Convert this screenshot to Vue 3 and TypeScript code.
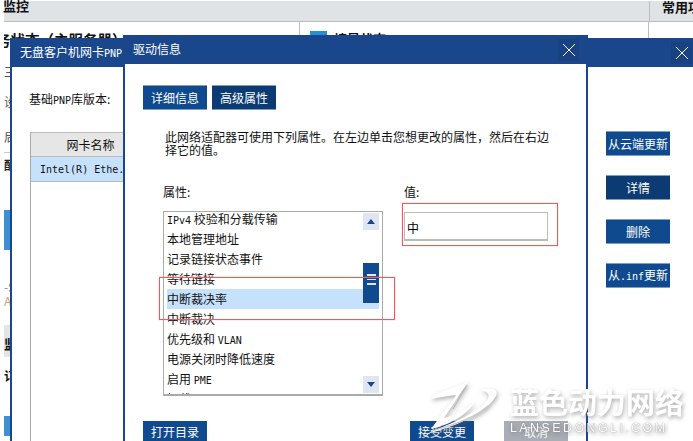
<script setup lang="ts">
const props: { label: string; latin?: string }[] = [
  { label: '本地管理地址' },
  { label: '记录链接状态事件' },
  { label: '等待链接' },
  { label: '中断裁决率' },
  { label: '中断裁决' },
  { label: '优先级和 ', latin: 'VLAN' },
  { label: '电源关闭时降低速度' },
  { label: '启用 ', latin: 'PME' },
  { label: '卸载 ', latin: 'TCP/IP' },
]
const selected = '中断裁决率'
</script>

<template>
  <div class="screen">
    <!-- page behind the dialogs -->
    <div class="page">
      <div class="page-head">
        <b class="head-a">监控</b>
        <b class="head-b">常用项</b>
      </div>
      <div class="page-body">
        <div class="col-a">
          <b class="status">务状态（主服务器）</b>
          <div class="frag f1">三</div>
          <div class="frag f2">设</div>
          <div class="frag f3">后</div>
          <div class="rule"></div>
          <b class="frag f4">配</b>
          <div class="blue b1"></div>
          <div class="frag f5">-S</div>
          <div class="frag f6">AC</div>
          <div class="band"><b>监</b></div>
          <b class="frag f7">订</b>
          <div class="blue b2"></div>
        </div>
        <div class="col-b">
          <span class="square"></span><b>接是状态</b>
        </div>
        <div class="col-c"></div>
      </div>
    </div>

    <!-- back dialog -->
    <section class="win win-back">
      <header class="win-head">
        <span class="title">无盘客户机网卡<span class="mono">PNP-</span></span>
        <span class="close">
          <svg width="16" height="16" viewBox="0 0 16 16"><path d="M2 2 14 14M14 2 2 14" stroke="#fff" stroke-width="1" fill="none" /></svg>
        </span>
      </header>
      <div class="back-body">
        <div class="back-left">
          <div class="base-lib">基础<span class="mono">PNP</span>库版本:</div>
          <div class="nic-table">
            <div class="nic-head">网卡名称</div>
            <div class="nic-row mono">Intel(R) Ethe.</div>
          </div>
        </div>
        <div class="back-actions">
          <button class="btn">从云端更新</button>
          <button class="btn dark">详情</button>
          <button class="btn">删除</button>
          <button class="btn">从<span class="mono">.inf</span>更新</button>
        </div>
      </div>
    </section>

    <!-- front dialog -->
    <section class="win win-front">
      <header class="win-head">
        <span class="title">驱动信息</span>
        <span class="close">
          <svg width="16" height="16" viewBox="0 0 16 16"><path d="M2 2 14 14M14 2 2 14" stroke="#fff" stroke-width="1" fill="none" /></svg>
        </span>
      </header>
      <div class="front-body">
        <div class="tabs">
          <button class="btn">详细信息</button>
          <button class="btn dark">高级属性</button>
        </div>
        <p class="desc">此网络适配器可使用下列属性。在左边单击您想更改的属性，然后在右边<br />择它的值。</p>
        <div class="fields">
          <div class="field-list">
            <div class="label">属性:</div>
            <div class="listbox">
              <div class="items">
                <div class="item partial"><span class="mono">IPv4</span> 校验和分载传输</div>
                <div v-for="p in props" :key="p.label" class="item" :class="{ sel: p.label === selected }">
                  {{ p.label }}<span v-if="p.latin" class="mono">{{ p.latin }}</span>
                </div>
              </div>
              <div class="scrollbar">
                <div class="arrow"><svg width="8" height="5" viewBox="0 0 10 6"><path d="M5 0 10 6H0Z" fill="#134a8e" /></svg></div>
                <div class="track">
                  <div class="thumb"><i></i><i></i><i></i></div>
                </div>
                <div class="arrow"><svg width="8" height="5" viewBox="0 0 10 6"><path d="M0 0H10L5 6Z" fill="#134a8e" /></svg></div>
              </div>
            </div>
          </div>
          <div class="field-value">
            <div class="label">值:</div>
            <div class="value-box">中</div>
          </div>
        </div>
        <div class="front-actions">
          <button class="btn">打开目录</button>
          <div class="right-actions">
            <button class="btn">接受变更</button>
            <button class="btn muted">取消</button>
          </div>
        </div>
      </div>
    </section>

    <!-- annotations -->
    <div class="mark mark-row"></div>
    <div class="mark mark-value"></div>

    <!-- watermark -->
    <div class="wm">
      <svg class="wm-logo" width="76" height="54" viewBox="0 0 76 54">
        <path d="M10 14 C22 9 34 5 45 1 L21 37 C32 34 44 28 52 20 C46 32 30 43 8 48 L33 14 C25 15 17 16 8 18Z" fill="#fff" />
        <path d="M44 4 30 28" stroke="#b4b7bb" stroke-width="1" fill="none" />
        <path d="M57 9 C70 5 76 9 73 15 C65 30 36 45 3 53 C30 42 58 30 65 18 C67 13 64 10 57 9Z" fill="#fff" />
        <path d="M8 50 C32 44 54 35 66 24" stroke="#c9ccd0" stroke-width="1.2" fill="none" />
      </svg>
      <div class="wm-text">
        <div class="wm-cn">蓝色动力网络</div>
        <div class="wm-en">LANSEDONGLI.COM</div>
      </div>
    </div>
  </div>
</template>

<style scoped>
.screen {
  position: relative;
  width: 693px;
  height: 441px;
  overflow: hidden;
  background: #fff;
  color: #111;
  font: 12px/1.2 "Noto Sans CJK SC", "Liberation Sans", sans-serif;
}
.mono {
  font-family: "DejaVu Sans Mono", "Liberation Mono", monospace;
  font-size: 10px;
}
.page {
  padding: 1px 0 0 4px;
}
.page-head {
  display: flex;
  justify-content: space-between;
  height: 20px;
  background: #dfe3e6;
  border-bottom: 1px solid #bdbdbd;
  font-size: 13px;
  line-height: 9px;
}
.head-a {
  margin-left: -1px;
}
.head-b {
  width: 44px;
  line-height: 12px;
  padding-left: 12px;
  border-left: 1px solid #bdbdbd;
  box-sizing: border-box;
  white-space: nowrap;
  overflow: hidden;
}
.page-body {
  display: grid;
  grid-template-columns: 295px 350px 1fr;
  height: 419px;
}
.col-a {
  overflow: hidden;
  white-space: nowrap;
}
.status {
  display: block;
  margin-top: 8px;
  margin-left: -8px;
  font-size: 14.5px;
  height: 35px;
  line-height: 20px;
}
.frag {
  font-size: 12px;
  color: #555;
  height: 14px;
  line-height: 14px;
}
.f2 {
  margin-top: 16px;
}
.f3 {
  margin-top: 21px;
}
.rule {
  margin-top: 8px;
  height: 1px;
  width: 8px;
  background: #ccc;
}
b.f4 {
  margin-top: 5px;
  display: block;
  color: #222;
}
.blue {
  width: 8px;
  background: #3f8fd4;
}
.b1 {
  margin-top: 38px;
  height: 40px;
}
.f5 {
  margin-top: 30px;
  color: #8a8a8a;
}
.f6 {
  color: #c9a27a;
}
.band {
  margin-top: 17px;
  height: 32px;
  background: #e2e4e6;
  line-height: 38px;
  font-size: 13px;
}
b.f7 {
  display: block;
  margin-top: 12px;
  color: #111;
}
.b2 {
  margin-top: 33px;
  height: 20px;
}
.col-b {
  border-left: 1px solid #bdbdbd;
  border-right: 1px solid #bdbdbd;
  padding: 9px 0 0 10px;
  font-size: 13px;
  display: flex;
  gap: 7px;
  align-items: flex-start;
}
.square {
  width: 17px;
  height: 12px;
  background: #2a8fd0;
}
.win {
  position: absolute;
  display: flex;
  flex-direction: column;
  background: #fff;
  border-left: 2px solid #1a478c;
  border-right: 2px solid #1a478c;
  box-sizing: border-box;
}
.win-back {
  left: 10px;
  top: 38px;
  width: 700px;
  height: 420px;
}
.win-front {
  left: 123px;
  top: 35px;
  width: 465px;
  height: 420px;
}
.win-head {
  flex: none;
  height: 29px;
  margin: 0 -2px;
  background: #1a478c;
  color: #fff;
  display: flex;
  align-items: center;
  justify-content: space-between;
  font-size: 12px;
}
.win-back .win-head {
  padding: 0 0 0 10px;
}
.win-front .win-head {
  padding: 0 9px 0 10px;
}
.win-back .title {
  white-space: nowrap;
}
.close {
  width: 21px;
  height: 22px;
  display: flex;
  align-items: center;
  justify-content: center;
  background: #184282;
}
.win-back .close {
  margin-right: 18px;
}
.back-body {
  display: grid;
  grid-template-columns: 594px 64px;
  flex: 1;
}
.base-lib {
  margin: 25px 0 0 17px;
  height: 14px;
  line-height: 14px;
}
.nic-table {
  margin: 26px 0 0 18px;
  height: 320px;
  width: 110px;
  border-left: 1px solid #aaa;
  border-top: 1px solid #bbb;
}
.nic-head {
  height: 23px;
  background: #e6e6e6;
  border-bottom: 1px solid #bbb;
  text-align: center;
  line-height: 24px;
  padding-left: 9px;
}
.nic-row {
  height: 24px;
  background: #c5e1fb;
  border-bottom: 1px solid #bbb;
  line-height: 25px;
  padding-left: 9px;
  white-space: nowrap;
  color: #111;
}
.back-actions {
  display: flex;
  flex-direction: column;
  gap: 19px;
  padding-top: 64px;
}
.btn {
  flex: none;
  width: 64px;
  height: 25px;
  padding: 0;
  border: 0;
  border-top: 1px solid #7f9cc2;
  border-bottom: 1px solid #7f9cc2;
  box-sizing: border-box;
  background: #104a8e;
  color: #fff;
  font: 12px/1 "Noto Sans CJK SC", sans-serif;
  white-space: nowrap;
}
.btn.dark {
  background: #0c3a72;
}
.btn.muted {
  background: #a9adb5;
  border-color: #a9adb5;
}
.front-body {
  flex: 1;
  padding: 21px 0 0 18px;
  display: flex;
  flex-direction: column;
}
.tabs {
  display: flex;
  gap: 5px;
}
.desc {
  margin: 20px 0 0 22px;
  width: 400px;
  line-height: 13px;
  white-space: nowrap;
}
.fields {
  display: flex;
  margin-top: 28px;
  padding-left: 20px;
  height: 237px;
}
.field-list {
  width: 241px;
}
.label {
  height: 15px;
  line-height: 15px;
  margin-bottom: 12px;
}
.listbox {
  position: relative;
  width: 220px;
  height: 185px;
  box-sizing: border-box;
  border: 1px solid #aaa;
  border-bottom-width: 2px;
  padding-left: 3px;
  overflow: hidden;
}
.items {
  margin-top: -3px;
}
.item {
  height: 20px;
  line-height: 20px;
  white-space: nowrap;
  width: 212px;
}
.item.sel {
  background: #c5e1fb;
}
.scrollbar {
  position: absolute;
  top: 1px;
  right: 3px;
  bottom: 1px;
  width: 16px;
  display: flex;
  flex-direction: column;
}
.arrow {
  flex: none;
  height: 17px;
  background: #e0e5f2;
  display: flex;
  align-items: center;
  justify-content: center;
}
.track {
  flex: 1;
  padding-top: 33px;
}
.thumb {
  height: 40px;
  background: #104a8e;
  display: flex;
  flex-direction: column;
  align-items: center;
  justify-content: center;
  gap: 3px;
  padding-bottom: 7px;
  box-sizing: border-box;
}
.thumb i {
  width: 9px;
  height: 1.5px;
  background: #dfe6f2;
}
.field-value .label {
  margin-bottom: 13px;
}
.value-box {
  width: 144px;
  height: 29px;
  box-sizing: border-box;
  border: 1px solid #bbb;
  border-bottom-width: 2px;
  line-height: 29px;
  padding-left: 2px;
  color: #000;
}
.front-actions {
  display: flex;
  justify-content: space-between;
  margin-right: 18px;
}
.right-actions {
  display: flex;
  gap: 30px;
}
.front-actions .btn {
  border-top: 0;
  border-bottom: 0;
  height: 22px;
}
.mark {
  position: absolute;
  border: 1px solid #f05a5a;
  box-shadow: 0 0 1px #f79a9a;
  box-sizing: border-box;
}
.mark-row {
  left: 159px;
  top: 277px;
  width: 236px;
  height: 43px;
}
.mark-value {
  left: 402px;
  top: 203px;
  width: 156px;
  height: 43px;
}
.wm {
  position: absolute;
  left: 423px;
  top: 381px;
  display: flex;
  gap: 11px;
  align-items: flex-start;
  filter: drop-shadow(1px 2px 2px rgba(90, 90, 90, 0.5));
}
.wm-logo {
  flex: none;
}
.wm-text {
  padding-top: 4px;
  color: #fff;
  white-space: nowrap;
}
.wm-cn {
  font: 700 29px/32px "Noto Sans CJK SC", sans-serif;
}
.wm-en {
  margin-top: 5px;
  font: 12.5px/12px "Liberation Sans", sans-serif;
  letter-spacing: 2.4px;
  color: #fff;
  text-shadow: 0 0 1px #777;
}
</style>
